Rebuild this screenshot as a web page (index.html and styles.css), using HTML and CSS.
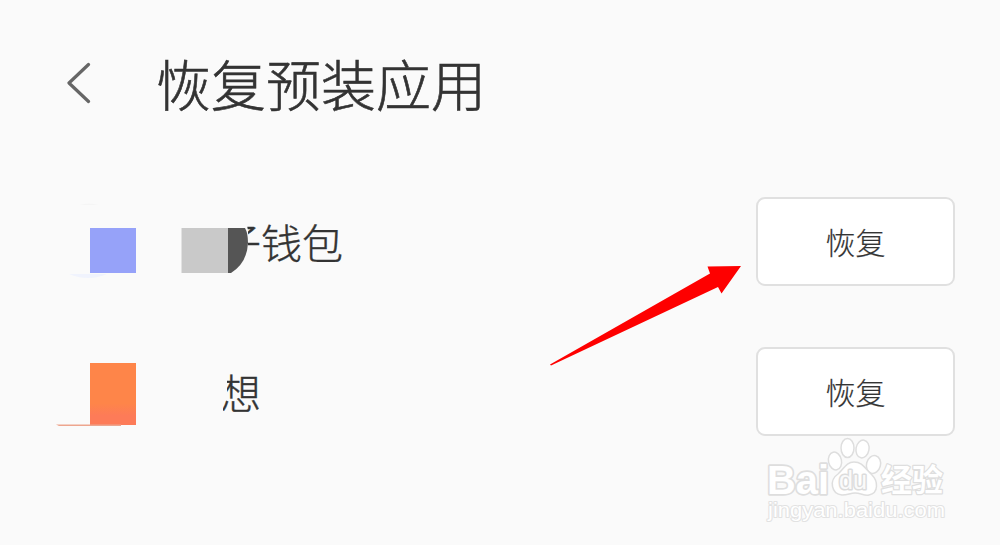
FILE: index.html
```html
<!DOCTYPE html>
<html lang="zh-CN">
<head>
  <meta charset="UTF-8" />
  <meta name="viewport" content="width=device-width, initial-scale=1.0" />
  <title>恢复预装应用</title>
  <link rel="stylesheet" href="styles.css">
</head>
<body>
  <header class="header">
    <svg class="back" width="24" height="42" viewBox="0 0 24 42">
      <path d="M21.500 2.500 L2 21 L21.500 39.500" />
    </svg>
    <h1 class="title">恢复预装应用</h1>
  </header>

  <main class="list">
    <div class="row">
      <svg class="icon" width="200" height="90" viewBox="0 -1 200 90">
        <path d="M30 8 Q39 5 48 8 Z" fill="#f5f5f5" />
        <path d="M19 77 H57 Q38 85 19 77 Z" fill="#f0f3fd" />
        <rect x="40" y="31" width="46" height="45" fill="#96a2f9" />
        <rect x="131.500" y="31" width="46.500" height="45" fill="#c9c9c9" />
        <path d="M178 31 H195 Q198 36 198 46 Q197 66 181 76 H178 Z" fill="#555" />
      </svg>
      <span class="name name-covered">子钱包</span>
      <button class="restore">恢复</button>
    </div>
    <div class="row">
      <svg class="icon" width="200" height="90" viewBox="0 -1 200 90">
        <defs>
          <linearGradient id="orange" x1="0" y1="0" x2="0" y2="1">
            <stop offset="0.65" stop-color="#fe8549" />
            <stop offset="0.85" stop-color="#fd7b58" />
          </linearGradient>
        </defs>
        <rect x="40" y="16" width="46" height="62" fill="url(#orange)" />
        <path d="M6 77.500 H71 V79 H9 Z" fill="#eda58e" />
      </svg>
      <span class="name name-cut">想</span>
      <button class="restore">恢复</button>
    </div>
  </main>

  <svg class="arrow" width="194" height="102" viewBox="0 0 194 102">
    <path d="M0 100.500 L160 9.500 L157.500 2.500 L191 2 L171.500 29.500 L168 23 L1 101.500 Z" />
  </svg>

  <svg class="watermark" width="200" height="95" viewBox="0 0 200 95">
    <text class="wm-logo" x="7" y="58.500" textLength="62" lengthAdjust="spacingAndGlyphs">Bai</text>
    <ellipse cx="75" cy="26" rx="6.500" ry="9" transform="rotate(-12 75 26)" />
    <ellipse cx="87.500" cy="13" rx="6.500" ry="9.500" />
    <ellipse cx="102.500" cy="14" rx="6.500" ry="9" transform="rotate(10 102.500 14)" />
    <ellipse cx="113.500" cy="29.500" rx="7" ry="9" transform="rotate(15 113.500 29.500)" />
    <path d="M94 27 C86 27 84 34 78 39 C69 45 71 59 82 60 C88 60 90 58 95 58 C101 58 104 61 109 60 C119 58 118 46 112 40 C105 34 103 27 94 27 Z" />
    <text class="wm-du" x="79" y="54" textLength="28" lengthAdjust="spacingAndGlyphs">du</text>
    <text class="wm-cn" x="121" y="56">经验</text>
    <text class="wm-url" x="8" y="82" textLength="177" lengthAdjust="spacingAndGlyphs">jingyan.baidu.com</text>
  </svg>
</body>
</html>
```
FILE: styles.css
```css
body {
  margin: 0;
  height: 545px;
  position: relative;
  overflow: hidden;
  background: #fafafa;
  color: #333;
  font-family: "Noto Sans CJK SC", sans-serif;
}

.header {
  box-sizing: border-box;
  display: flex;
  align-items: center;
  height: 166px;
  padding-left: 67px;
}

.back {
  fill: none;
  stroke: #666;
  stroke-width: 3.2;
  stroke-linecap: round;
  stroke-linejoin: round;
}

.title {
  margin: 0 0 2px 65px;
  font-size: 55px;
  font-weight: 300;
  line-height: 80px;
  -webkit-text-stroke: 0.6px #333;
}

.row {
  display: flex;
  align-items: center;
  height: 150px;
  padding: 0 45px 0 50px;
}

.icon {
  flex: none;
}

.name {
  margin-left: -30px;
  font-size: 41px;
  font-weight: 300;
  line-height: 60px;
  -webkit-text-stroke: 0.4px #333;
}

/* only the right part of the first character shows */
.name-covered {
  clip-path: polygon(25px 0, 100% 0, 100% 100%, 28px 100%, 28px 20px);
}

/* the left part of the character is erased */
.name-cut {
  clip-path: polygon(7px 0, 100% 0, 100% 100%, 3px 100%, 3px 44px, 7px 36px);
}

.restore {
  box-sizing: border-box;
  width: 199px;
  height: 89px;
  margin-left: auto;
  padding: 0 0 1px;
  border: 2px solid #e0e0e0;
  border-radius: 9px;
  background: #fff;
  color: #333;
  font-family: inherit;
  font-size: 30px;
  font-weight: 300;
  -webkit-text-stroke: 0.2px #333;
}

.arrow {
  position: absolute;
  left: 550px;
  top: 264px;
  fill: #fe0000;
}

.watermark {
  position: absolute;
  left: 760px;
  top: 435px;
  fill: #fff;
  stroke: #dedede;
  stroke-width: 1.5;
}

.watermark text {
  paint-order: stroke;
  stroke-linejoin: round;
}

.watermark .wm-logo {
  font: bold 41px "Liberation Sans", sans-serif;
  stroke-width: 3.5;
}

.watermark .wm-du {
  font: 25px "Liberation Sans", sans-serif;
  fill: #fafafa;
  stroke: #dcdcdc;
  stroke-width: 3;
}

.watermark .wm-cn {
  font: 700 31px "Noto Sans CJK SC", sans-serif;
  stroke-width: 2.5;
}

.watermark .wm-url {
  font: 20px "Liberation Sans", sans-serif;
  stroke: #e2e2e2;
  stroke-width: 2;
}
```
